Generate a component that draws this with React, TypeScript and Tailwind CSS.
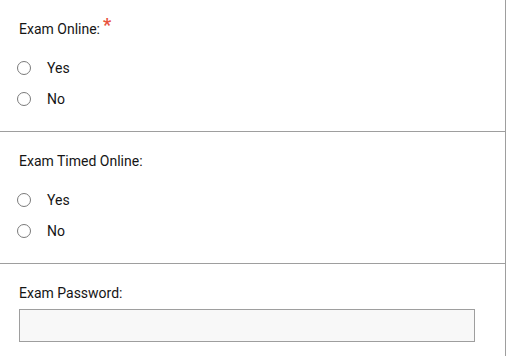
import React from "react";

type Section = {
  label: string;
  required?: boolean;
  options: string[];
};

const sections: Section[] = [
  { label: "Exam Online:", required: true, options: ["Yes", "No"] },
  { label: "Exam Timed Online:", options: ["Yes", "No"] },
];

const RadioRow = ({ text }: { text: string }) => (
  <label className="flex h-[31px] items-center pl-[17px]">
    <span className="block h-[14px] w-[14px] rounded-full border border-[#7a7a7a]" />
    <span className="ml-[16px] text-[14px] leading-4 text-[#151515]">{text}</span>
  </label>
);

export default function App() {
  return (
    <div
      className="h-[356px] w-[506px] border-r border-[#9e9e9e] bg-white"
      style={{ fontFamily: "Roboto, 'Liberation Sans', sans-serif" }}
    >
      {sections.map((s) => (
        <div key={s.label} className="h-[132px] border-b border-[#9e9e9e] pt-[21px]">
          <div className="flex pl-[19px] text-[14px] leading-4 text-[#151515]">
            {s.label}
            {s.required && (
              <span className="ml-[3px] -mt-[4px] text-[18px] font-bold leading-4 text-[#e8543f]">*</span>
            )}
          </div>
          <div className="mt-[15px]">
            {s.options.map((o) => (
              <RadioRow key={o} text={o} />
            ))}
          </div>
        </div>
      ))}
      <div className="pt-[21px]">
        <div className="pl-[19px] text-[14px] leading-4 text-[#151515]">Exam Password:</div>
        <input
          type="password"
          className="ml-[19px] mt-[8px] block h-[33px] w-[456px] border border-[#9e9e9e] bg-[#f8f8f8] outline-none"
        />
      </div>
    </div>
  );
}
